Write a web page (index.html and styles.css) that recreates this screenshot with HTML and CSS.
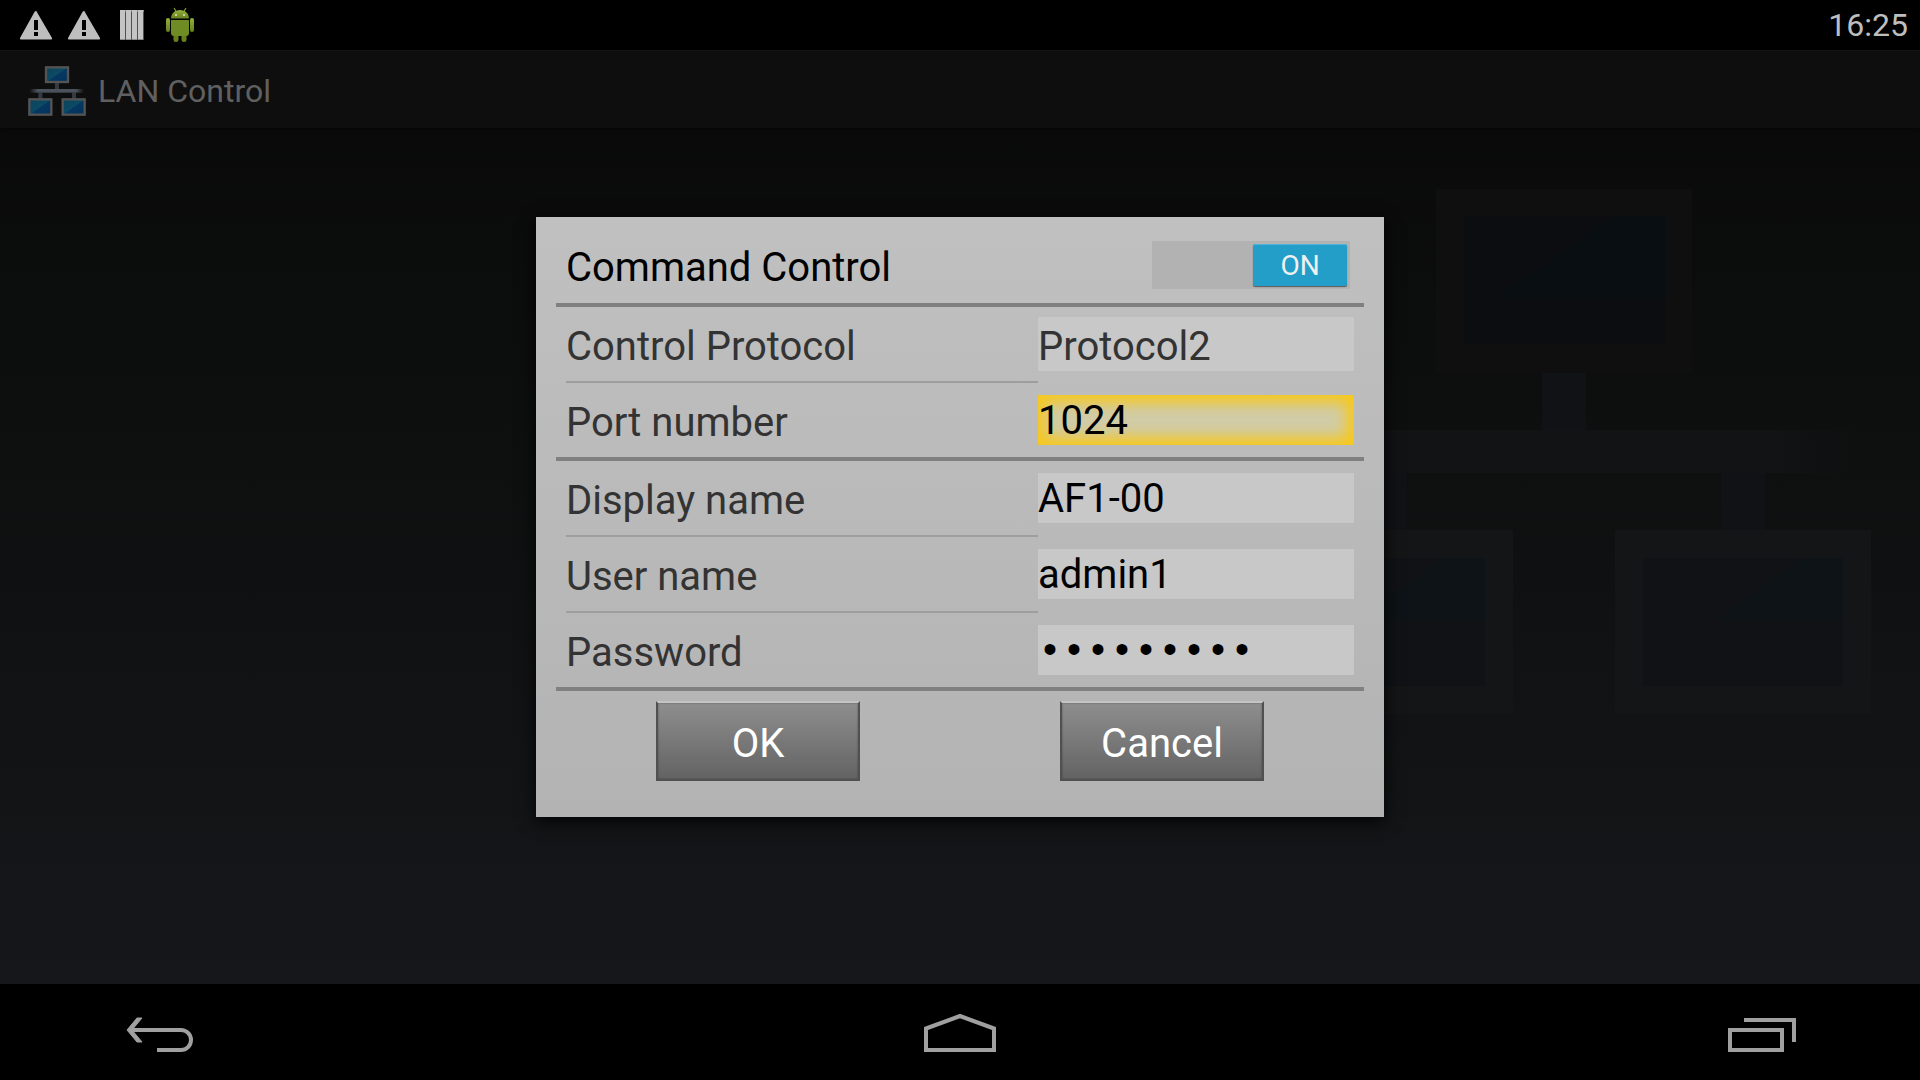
FILE: index.html
```html
<!DOCTYPE html>
<html lang="en">
<head>
    <meta charset="UTF-8">
    <meta name="viewport" content="width=device-width, initial-scale=1.0">
    <title>LAN Control</title>
    <link rel="stylesheet" href="styles.css">
</head>
<body>
    <div class="status-bar">
        <div class="status-icons">
            <svg class="status-icon" viewBox="0 0 48 48">
                <path d="M24 9.5 L40 37 Q40.500 38.500 39 38.500 L9 38.500 Q7.500 38.500 8 37 L22.500 11 Q24 9 25.500 11 Z" fill="#bebebe"/>
                <rect x="22" y="19" width="4" height="10" fill="#000"/>
                <rect x="22" y="31" width="4" height="4" fill="#000"/>
            </svg>
            <svg class="status-icon" viewBox="0 0 48 48">
                <path d="M24 9.5 L40 37 Q40.500 38.500 39 38.500 L9 38.500 Q7.500 38.500 8 37 L22.500 11 Q24 9 25.500 11 Z" fill="#bebebe"/>
                <rect x="22" y="19" width="4" height="10" fill="#000"/>
                <rect x="22" y="31" width="4" height="4" fill="#000"/>
            </svg>
            <svg class="status-icon" viewBox="0 0 48 48">
                <path d="M12 9h24v30H12z" fill="#8c8c8c"/>
                <path d="M12 9h5v29h-5zM18 9h5v29h-5zM24 9h5v29h-5zM30 9h5v29h-5z" fill="#c4c4c4"/>
                <path d="M17.500 11v28M23.500 11v28M29.500 11v28M35.500 11v28" stroke="#505050" stroke-width="1"/>
            </svg>
            <svg class="status-icon" viewBox="0 0 48 48">
                <defs>
                    <linearGradient id="robot" x1="0" y1="0" x2="0" y2="1">
                        <stop offset="0" stop-color="#93b03a"/>
                        <stop offset="1" stop-color="#66801f"/>
                    </linearGradient>
                </defs>
                <path d="M18 7l2.500 4M30 7l-2.500 4" stroke="#7d9a2e" stroke-width="1.300"/>
                <path d="M15 17.500c0-5 4-8.500 9-8.500s9 3.500 9 8.500z" fill="url(#robot)"/>
                <circle cx="20" cy="14" r="1" fill="#dde5c8"/>
                <circle cx="28" cy="14" r="1" fill="#dde5c8"/>
                <path d="M15 19h18v13q0 3-3 3H18q-3 0-3-3z" fill="#6f8c24"/>
                <rect x="10" y="17" width="4" height="14" rx="2" fill="url(#robot)"/>
                <rect x="34" y="17" width="4" height="14" rx="2" fill="url(#robot)"/>
                <path d="M17.500 35h5v4q0 2-2.500 2t-2.500-2zM25.500 35h5v4q0 2-2.500 2t-2.500-2z" fill="#66801f"/>
            </svg>
        </div>
        <span class="clock">16:25</span>
    </div>

    <div class="screen">
        <header class="action-bar">
            <svg class="app-icon" viewBox="0 0 174 150">
                <defs>
                    <linearGradient id="panel" x1="0" y1="0" x2="1" y2="1">
                        <stop offset="0" stop-color="#0f4258"/>
                        <stop offset="0.500" stop-color="#0b4a66"/>
                        <stop offset="0.510" stop-color="#053861"/>
                        <stop offset="1" stop-color="#04325c"/>
                    </linearGradient>
                    <linearGradient id="cable" x1="0" y1="0" x2="1" y2="0">
                        <stop offset="0" stop-color="#4c525c" stop-opacity="0"/>
                        <stop offset="0.150" stop-color="#4c525c"/>
                        <stop offset="0.850" stop-color="#4c525c"/>
                        <stop offset="1" stop-color="#4c525c" stop-opacity="0"/>
                    </linearGradient>
                </defs>
                <path d="M81 50h12v20H81zM31 80h12v18H31zM132 80h12v18h-12z" fill="#343a44"/>
                <rect x="4" y="69" width="164" height="11" fill="url(#cable)"/>
                <g fill="url(#panel)" stroke="#545454" stroke-width="7">
                    <rect x="54" y="4" width="66" height="44"/>
                    <rect x="4" y="100" width="66" height="46"/>
                    <rect x="104" y="100" width="66" height="46"/>
                </g>
            </svg>
            <h1 class="app-title">LAN Control</h1>
        </header>

        <main class="content">
            <svg class="watermark" viewBox="0 0 614 525">
                <defs>
                    <linearGradient id="bar" x1="0" y1="0" x2="1" y2="0">
                        <stop offset="0" stop-color="#121315" stop-opacity="0"/>
                        <stop offset="0.150" stop-color="#121315"/>
                        <stop offset="0.850" stop-color="#121315"/>
                        <stop offset="1" stop-color="#121315" stop-opacity="0"/>
                    </linearGradient>
                </defs>
                <path d="M285 184h44v57h-44zM106 284h44v57h-44zM464 284h44v57h-44z" fill="#111215"/>
                <rect x="14" y="241" width="586" height="43" fill="url(#bar)"/>
                <path d="M179 0h256v184H179z" fill="#0f0f0f"/>
                <path d="M207 27h201v128H207z" fill="#0b0d10"/>
                <path d="M358 27h50v82H238z" fill="#080e11"/>
                <path d="M0 341h256v184H0zM358 341h256v184H358z" fill="#141516"/>
                <path d="M28 369h200v128H28zM386 369h200v128H386z" fill="#101216"/>
                <path d="M188 369h40v62H100zM546 369h40v62H458z" fill="#0d1316"/>
            </svg>
        </main>

        <div class="overlay">
            <form class="dialog">
                <div class="row row-head">
                    <label class="label title" for="command">Command Control</label>
                    <span class="switch">
                        <input class="switch-input" type="checkbox" id="command" checked>
                        <span class="thumb">ON</span>
                    </span>
                </div>
                <div class="group">
                    <div class="row">
                        <label class="label" for="protocol">Control Protocol</label>
                        <select class="field select" id="protocol">
                            <option>Protocol1</option>
                            <option selected>Protocol2</option>
                        </select>
                    </div>
                    <div class="row">
                        <label class="label" for="port">Port number</label>
                        <input class="field active" type="text" id="port" value="1024">
                    </div>
                </div>
                <div class="group">
                    <div class="row">
                        <label class="label" for="display">Display name</label>
                        <input class="field" type="text" id="display" value="AF1-00">
                    </div>
                    <div class="row">
                        <label class="label" for="user">User name</label>
                        <input class="field" type="text" id="user" value="admin1">
                    </div>
                    <div class="row">
                        <label class="label" for="password">Password</label>
                        <input class="field password" type="password" id="password" value="password1">
                    </div>
                </div>
                <div class="actions">
                    <button class="button" type="button">OK</button>
                    <button class="button" type="button">Cancel</button>
                </div>
            </form>
        </div>
    </div>

    <nav class="nav-bar">
        <button class="nav-button" type="button" aria-label="Back">
            <svg class="nav-icon" viewBox="0 0 120 80">
                <path d="M32 40h49a10 10 0 0 1 0 20H57" fill="none" stroke="#a0a0a0" stroke-width="4"/>
                <path d="M37 28h5L32 40l10 12h-5L27 40z" fill="#a0a0a0" stroke="#a0a0a0" stroke-width="1"/>
            </svg>
        </button>
        <button class="nav-button" type="button" aria-label="Home">
            <svg class="nav-icon" viewBox="0 0 120 80">
                <path d="M26 60V38.500L60 26l34 12.500V60z" fill="none" stroke="#a0a0a0" stroke-width="4"/>
            </svg>
        </button>
        <button class="nav-button" type="button" aria-label="Recent apps">
            <svg class="nav-icon" viewBox="0 0 120 80">
                <path d="M30 40h52v20H30zM44 30h50v22" fill="none" stroke="#a0a0a0" stroke-width="4"/>
            </svg>
        </button>
    </nav>
</body>
</html>
```
FILE: styles.css
```css
* {
    box-sizing: border-box;
}

body {
    margin: 0;
    min-height: 100vh;
    display: flex;
    flex-direction: column;
    background-color: #000;
    font-family: Roboto, sans-serif;
}

.status-bar {
    height: 50px;
    padding: 0 12px;
    display: flex;
    justify-content: space-between;
    align-items: center;
}

.status-icons {
    display: flex;
}

.status-icon {
    width: 48px;
    height: 48px;
}

.clock {
    font-size: 32px;
    color: #bebebe;
}

.screen {
    position: relative;
    flex: 1;
    display: flex;
    flex-direction: column;
    background: linear-gradient(#090909, #0e0f0f 45%, #15171a);
}

.action-bar {
    height: 78px;
    padding: 0 28px;
    display: flex;
    align-items: center;
    gap: 12px;
    background-color: #0e0e0e;
    border-top: 1px solid #141414;
    box-shadow: 0 2px 4px rgba(0, 0, 0, 0.4);
}

.app-icon {
    width: 58px;
    height: 50px;
    margin-top: 2px;
}

.app-title {
    margin: 0;
    padding-top: 2px;
    font-size: 32px;
    font-weight: 400;
    color: #606060;
}

.content {
    position: relative;
    flex: 1;
}

.watermark {
    position: absolute;
    top: 61px;
    right: 49px;
    width: 614px;
}

/* dialog */
.overlay {
    position: absolute;
    inset: 0;
    display: flex;
    justify-content: center;
    align-items: center;
}

.dialog {
    width: 848px;
    max-width: 100%;
    padding: 10px 20px 36px;
    background: linear-gradient(#c0c0c0, #b3b3b3);
    box-shadow: 0 4px 16px rgba(0, 0, 0, 0.9);
}

.row {
    display: flex;
    align-items: center;
    padding: 0 10px;
}

.row-head {
    height: 80px;
    padding-right: 14px;
    border-bottom: 4px solid #808080;
}

.group {
    border-bottom: 4px solid #808080;
}

.label {
    flex: 1;
    height: 76px;
    padding-top: 4px;
    border-bottom: 2px solid #9e9e9e;
    font-size: 40px;
    line-height: 72px;
    color: #333;
}

.row:last-child .label {
    height: 74px;
    border-bottom: none;
}

.title {
    border-bottom: none;
    line-height: 74px;
    color: #000;
}

.field {
    width: 316px;
    height: 50px;
    margin: 0 0 2px;
    padding: 0;
    border: none;
    border-radius: 0;
    outline: none;
    background-color: #c8c8c8;
    font-family: Roboto, sans-serif;
    font-size: 40px;
    color: #000;
}

.row:last-child .field {
    margin-bottom: 0;
}

.select {
    height: 54px;
    padding-top: 4px;
    appearance: none;
    color: #333;
}

.active {
    background-color: #d1cca6;
    box-shadow: inset 0 0 14px 8px #f6c81f;
}

.password {
    padding-top: 4px;
    font-family: "Liberation Mono", monospace;
}

.switch {
    position: relative;
    width: 198px;
    height: 48px;
    padding: 3px;
    display: flex;
    justify-content: flex-end;
    background-color: #b2b2b2;
}

.switch-input {
    position: absolute;
    inset: 0;
    width: 100%;
    height: 100%;
    margin: 0;
    opacity: 0;
}

.thumb {
    width: 94px;
    height: 42px;
    border-radius: 2px;
    background-color: #239ec9;
    box-shadow: inset 0 1px #4db4d6, 0 1px 1px rgba(0, 0, 0, 0.5);
    font-size: 28px;
    line-height: 44px;
    text-align: center;
    color: #f0f0f0;
}

.actions {
    display: flex;
    justify-content: space-around;
    padding-top: 10px;
}

.button {
    width: 204px;
    height: 80px;
    padding: 4px 0 0;
    border: 2px solid #505050;
    border-top-color: #c4c4c4;
    background: linear-gradient(#8e8e8e, #636363);
    box-shadow: inset 0 0 2px rgba(0, 0, 0, 0.4);
    font-family: Roboto, sans-serif;
    font-size: 40px;
    color: #fff;
}

/* system navigation */
.nav-bar {
    height: 96px;
    padding: 0 80px 4px;
    display: flex;
    justify-content: space-between;
    align-items: center;
}

.nav-button {
    width: 160px;
    padding: 0;
    border: none;
    background: none;
}

.nav-icon {
    display: block;
    width: 120px;
    height: 80px;
    margin: 0 auto;
}
```
